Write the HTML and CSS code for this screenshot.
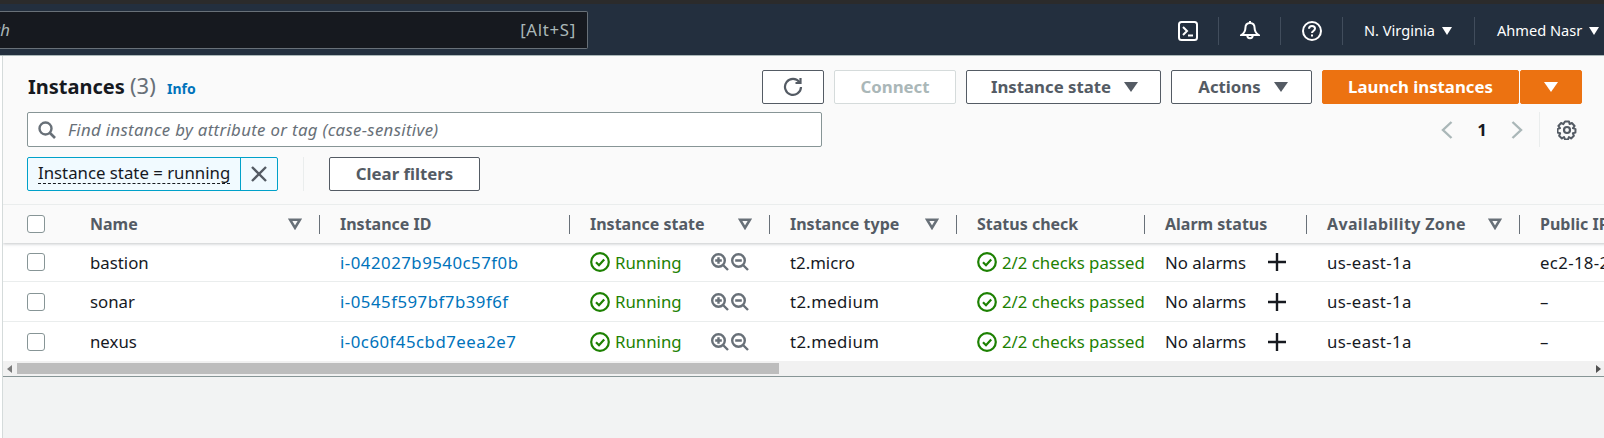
FILE: index.html
```html
<!DOCTYPE html>
<html lang="en">
<head>
    <meta charset="UTF-8">
    <title>Instances</title>
    <link rel="stylesheet" href="styles.css">
</head>
<body>
<svg class="defs" width="0" height="0">
    <symbol id="ok" viewBox="0 0 20 20"><circle cx="10" cy="10" r="8.800" fill="none" stroke="currentColor" stroke-width="2.200"/><path d="M6 10.200l3 3 5.200-5.800" fill="none" stroke="currentColor" stroke-width="2.200"/></symbol>
    <symbol id="zoom-in" viewBox="0 0 18 18"><circle cx="7.500" cy="7.500" r="6.300" fill="none" stroke="currentColor" stroke-width="2.400"/><path d="M12 12l5 5M4.200 7.500h6.600M7.500 4.200v6.600" fill="none" stroke="currentColor" stroke-width="2.400"/></symbol>
    <symbol id="zoom-out" viewBox="0 0 18 18"><circle cx="7.500" cy="7.500" r="6.300" fill="none" stroke="currentColor" stroke-width="2.400"/><path d="M12 12l5 5M4.200 7.500h6.600" fill="none" stroke="currentColor" stroke-width="2.400"/></symbol>
    <symbol id="plus" viewBox="0 0 18 18"><path d="M9 0v18M0 9h18" fill="none" stroke="currentColor" stroke-width="2.400"/></symbol>
    <symbol id="sort" viewBox="0 0 14 12"><path d="M2.200 1.800h9.600L7 9.800z" fill="none" stroke="currentColor" stroke-width="2.600"/></symbol>
</svg>

<header class="nav">
    <div class="nav_search">
        <span class="nav_search_text">Search</span>
        <span class="nav_search_key">[Alt+S]</span>
    </div>
    <div class="nav_items">
        <span class="nav_icon">
            <svg width="20" height="20" viewBox="0 0 20 20"><rect x="1" y="1" width="18" height="18" rx="2.500" fill="none" stroke="#fff" stroke-width="2"/><path d="M5 6l4 4-4 4M10 14.500h5" fill="none" stroke="#fff" stroke-width="2"/></svg>
        </span>
        <span class="nav_icon">
            <svg width="20" height="20" viewBox="0 0 20 20"><path d="M10 2c-3 0-4.600 2.200-4.600 5 0 3.400-1 5-4 7h17.200c-3-2-4-3.600-4-7 0-2.800-1.600-5-4.600-5zM7.300 14.500a2.700 2.700 0 0 0 5.400 0" fill="none" stroke="#fff" stroke-width="2"/><path d="M10 0v2" stroke="#fff" stroke-width="2"/></svg>
        </span>
        <span class="nav_icon">
            <svg width="20" height="20" viewBox="0 0 20 20"><circle cx="10" cy="10" r="9" fill="none" stroke="#fff" stroke-width="2"/><path d="M7 7.800c0-1.800 1.300-2.800 3-2.800s3 1 3 2.600c0 2.400-3 2.400-3 4.400" fill="none" stroke="#fff" stroke-width="2"/><rect x="9" y="13.500" width="2" height="2" fill="#fff"/></svg>
        </span>
        <span class="nav_menu nav_region">N. Virginia<i class="caret caret_white"></i></span>
        <span class="nav_menu nav_user">Ahmed Nasr<i class="caret caret_white"></i></span>
    </div>
</header>

<main class="content">
    <section class="panel">
        <div class="panel_top">
            <h1 class="title">Instances <span class="title_count">(3)</span> <a class="info">Info</a></h1>
            <div class="actions">
                <button class="btn btn_refresh">
                    <svg width="20" height="20" viewBox="0 0 20 20"><path d="M16.500 5.200A8 8 0 1 0 18 10" fill="none" stroke="#545b64" stroke-width="2.200"/><path d="M12.500 6h5V1" fill="none" stroke="#545b64" stroke-width="2.200"/></svg>
                </button>
                <button class="btn btn_connect">Connect</button>
                <button class="btn btn_state">Instance state<i class="caret"></i></button>
                <button class="btn btn_actions">Actions<i class="caret"></i></button>
                <div class="launch">
                    <button class="btn btn_launch">Launch instances</button>
                    <button class="btn btn_launch btn_launch_more"><i class="caret caret_white"></i></button>
                </div>
            </div>
        </div>
        <div class="panel_mid">
            <div class="search">
                <svg width="18" height="18" viewBox="0 0 18 18"><circle cx="7.500" cy="7.500" r="6" fill="none" stroke="#687078" stroke-width="2.400"/><path d="M12 12l5 5" stroke="#687078" stroke-width="2.600"/></svg>
                <span class="search_text">Find instance by attribute or tag (case-sensitive)</span>
            </div>
            <div class="pager">
                <svg width="14" height="20" viewBox="0 0 14 20"><path d="M11.500 2L3 10l8.500 8" fill="none" stroke="#aab7b8" stroke-width="2.400"/></svg>
                <span class="pager_num">1</span>
                <svg width="14" height="20" viewBox="0 0 14 20"><path d="M2.500 2L11 10l-8.500 8" fill="none" stroke="#aab7b8" stroke-width="2.400"/></svg>
                <span class="pager_gear">
                    <svg width="20" height="20" viewBox="0 0 20 20"><circle cx="10" cy="10" r="3" fill="none" stroke="#545b64" stroke-width="2.200"/><path d="M8 1.500h4l.6 2.600 2.300-1.100 2.700 3-1.600 2.100 2.500 1-.1 3.500-2.500.7 1 2.500-2.800 2.600-2.200-1.400-.9 2.400H8l-.9-2.400-2.200 1.400-2.800-2.600 1-2.500-2.500-.7L.5 9.100l2.500-1L1.400 6l2.700-3 2.300 1.100z" fill="none" stroke="#545b64" stroke-width="2" stroke-linejoin="round"/></svg>
                </span>
            </div>
        </div>
        <div class="panel_filters">
            <div class="chip">
                <span class="chip_label"><span class="chip_text">Instance state = running</span></span>
                <span class="chip_close">
                    <svg width="16" height="16" viewBox="0 0 16 16"><path d="M1 1l14 14M15 1L1 15" stroke="#545b64" stroke-width="2.400"/></svg>
                </span>
            </div>
            <span class="filters_sep"></span>
            <button class="btn btn_clear">Clear filters</button>
        </div>
    </section>

    <div class="table">
        <div class="row row_head">
            <div class="th th_check"><span class="box"></span></div>
            <div class="th"><div class="th_in">Name<svg class="sort" width="14" height="12"><use href="#sort"/></svg></div></div>
            <div class="th"><div class="th_in">Instance ID</div></div>
            <div class="th"><div class="th_in">Instance state<svg class="sort" width="14" height="12"><use href="#sort"/></svg></div></div>
            <div class="th"><div class="th_in">Instance type<svg class="sort" width="14" height="12"><use href="#sort"/></svg></div></div>
            <div class="th"><div class="th_in">Status check</div></div>
            <div class="th"><div class="th_in">Alarm status</div></div>
            <div class="th"><div class="th_in th_wide">Availability Zone<svg class="sort" width="14" height="12"><use href="#sort"/></svg></div></div>
            <div class="th"><div class="th_in">Public IPv4 DNS</div></div>
        </div>

        <div class="row row_first">
            <div class="td td_check"><span class="box"></span></div>
            <div class="td">bastion</div>
            <div class="td"><a class="link">i-042027b9540c57f0b</a></div>
            <div class="td td_state">
                <svg class="ok" width="20" height="20"><use href="#ok"/></svg><span class="green">Running</span>
                <span class="zooms"><svg width="18" height="18"><use href="#zoom-in"/></svg><svg width="18" height="18"><use href="#zoom-out"/></svg></span>
            </div>
            <div class="td">t2.micro</div>
            <div class="td td_status"><svg class="ok" width="20" height="20"><use href="#ok"/></svg><span class="green">2/2 checks passed</span></div>
            <div class="td td_alarm">No alarms<svg width="18" height="18"><use href="#plus"/></svg></div>
            <div class="td td_code">us-east-1a</div>
            <div class="td td_code">ec2-18-208-146-23.compute-1.amazonaws.com</div>
        </div>

        <div class="row">
            <div class="td td_check"><span class="box"></span></div>
            <div class="td">sonar</div>
            <div class="td"><a class="link">i-0545f597bf7b39f6f</a></div>
            <div class="td td_state">
                <svg class="ok" width="20" height="20"><use href="#ok"/></svg><span class="green">Running</span>
                <span class="zooms"><svg width="18" height="18"><use href="#zoom-in"/></svg><svg width="18" height="18"><use href="#zoom-out"/></svg></span>
            </div>
            <div class="td td_code">t2.medium</div>
            <div class="td td_status"><svg class="ok" width="20" height="20"><use href="#ok"/></svg><span class="green">2/2 checks passed</span></div>
            <div class="td td_alarm">No alarms<svg width="18" height="18"><use href="#plus"/></svg></div>
            <div class="td td_code">us-east-1a</div>
            <div class="td">–</div>
        </div>

        <div class="row">
            <div class="td td_check"><span class="box"></span></div>
            <div class="td">nexus</div>
            <div class="td"><a class="link">i-0c60f45cbd7eea2e7</a></div>
            <div class="td td_state">
                <svg class="ok" width="20" height="20"><use href="#ok"/></svg><span class="green">Running</span>
                <span class="zooms"><svg width="18" height="18"><use href="#zoom-in"/></svg><svg width="18" height="18"><use href="#zoom-out"/></svg></span>
            </div>
            <div class="td td_code">t2.medium</div>
            <div class="td td_status"><svg class="ok" width="20" height="20"><use href="#ok"/></svg><span class="green">2/2 checks passed</span></div>
            <div class="td td_alarm">No alarms<svg width="18" height="18"><use href="#plus"/></svg></div>
            <div class="td td_code">us-east-1a</div>
            <div class="td">–</div>
        </div>

        <div class="scroll">
            <i class="scroll_left"></i>
            <span class="scroll_thumb"></span>
            <i class="scroll_right"></i>
        </div>
    </div>
</main>
</body>
</html>
```

FILE: styles.css
```css
* {
    margin: 0;
    padding: 0;
    box-sizing: border-box;
}

html, body {
    height: 438px;
    overflow: hidden;
}

body {
    background-color: #fff;
    font-family: "Noto Sans", sans-serif;
    font-size: 16.8px;
    color: #16191f;
}

.defs {
    display: block;
    height: 0;
}

/* nav */
.nav {
    height: 56px;
    display: flex;
    align-items: center;
    padding-top: 4px;
    background-color: #232f3e;
    border-top: 4px solid #2b2b2b;
    border-bottom: 1px solid #aab7b8;
    color: #fff;
}

.nav_search {
    width: 588px;
    height: 38px;
    margin-top: -4px;
    display: flex;
    align-items: center;
    padding-right: 11px;
    background-color: #16191f;
    border: 1px solid #687078;
    border-left: 0;
    border-radius: 0 2px 2px 0;
    color: #aab7b8;
    overflow: hidden;
}

.nav_search_text {
    margin-left: -40px;
    font-style: italic;
}

.nav_search_key {
    margin-left: auto;
    letter-spacing: .7px;
}

.nav_items {
    margin-left: auto;
    margin-top: -2px;
    display: flex;
    align-items: center;
    height: 28px;
}

.nav_icon {
    width: 62px;
    height: 28px;
    display: flex;
    align-items: center;
    justify-content: center;
    border-right: 1px solid #414d5c;
}

.nav_menu {
    display: flex;
    align-items: center;
    padding-bottom: 2px;
    font-size: 14.6px;
}

.nav_region {
    width: 132px;
    height: 28px;
    padding-left: 21px;
    border-right: 1px solid #414d5c;
}

.nav_user {
    width: 129px;
    padding-left: 22px;
}

.caret {
    display: inline-block;
    width: 0;
    height: 0;
    margin-top: 2px;
    margin-left: 13px;
    border-left: 7px solid transparent;
    border-right: 7px solid transparent;
    border-top: 10px solid #545b64;
}

.nav_menu .caret {
    margin-left: 7px;
    border-left-width: 5px;
    border-right-width: 5px;
    border-top-width: 8px;
}

.caret_white {
    border-top-color: #fff;
}

/* page */
.content {
    height: 382px;
    margin-left: 2px;
    background-color: #f2f3f3;
    border-left: 1px solid #d5dbdb;
}

.panel {
    height: 148px;
    padding: 14px 22px 0 24px;
    background-color: #fafafa;
}

.panel_top, .panel_mid {
    display: flex;
    justify-content: space-between;
}

.panel_top {
    height: 34px;
    align-items: center;
}

.title {
    margin: -4px 0 0 1px;
    font-size: 20px;
    font-weight: 700;
}

.title_count {
    font-size: 22px;
    font-weight: 400;
    color: #687078;
}

.info {
    margin-left: 6px;
    font-size: 14px;
    font-weight: 700;
    color: #0073bb;
}

.actions {
    display: flex;
    gap: 10px;
}

.btn {
    height: 34px;
    display: flex;
    align-items: center;
    justify-content: center;
    padding-bottom: 2px;
    background-color: #fff;
    border: 1px solid #545b64;
    border-radius: 2px;
    font-family: inherit;
    font-size: 16.8px;
    font-weight: 700;
    color: #545b64;
}

.btn_refresh {
    width: 62px;
    padding-bottom: 0;
}

.btn_connect {
    width: 122px;
    border-color: #d5dbdb;
    color: #aab7b8;
}

.btn_state {
    width: 195px;
    padding-left: 2px;
}

.btn_actions {
    width: 141px;
    padding-left: 3px;
}

.launch {
    display: flex;
    gap: 1px;
}

.btn_launch {
    width: 197px;
    background-color: #ec7211;
    border-color: #ec7211;
    color: #fff;
}

.btn_launch_more {
    width: 62px;
}

.btn_launch_more .caret {
    margin-left: 0;
}

.panel_mid {
    margin-top: 8px;
    height: 35px;
}

.search {
    width: 795px;
    height: 35px;
    display: flex;
    align-items: center;
    gap: 12px;
    padding-left: 10px;
    background-color: #fff;
    border: 1px solid #879596;
    border-radius: 2px;
}

.search_text {
    font-style: italic;
    letter-spacing: .33px;
    color: #687078;
}

.pager {
    display: flex;
    align-items: center;
    height: 35px;
}

.pager_num {
    width: 56px;
    text-align: center;
    font-weight: 700;
}

.pager_gear {
    width: 43px;
    height: 35px;
    margin-left: 15px;
    display: flex;
    align-items: center;
    justify-content: center;
    padding-left: 12px;
    border-left: 1px solid #eaeded;
}

.panel_filters {
    margin-top: 10px;
    display: flex;
    align-items: center;
}

.chip {
    width: 251px;
    height: 34px;
    display: flex;
    background-color: #f1faff;
    border: 1px solid #00a1c9;
    border-radius: 2px;
}

.chip_label {
    flex: 1;
    display: flex;
    align-items: center;
    padding: 0 0 2px 10px;
}

.chip_text {
    line-height: 21px;
    white-space: nowrap;
    border-bottom: 1px dashed #16191f;
}

.chip_close {
    width: 37px;
    flex: none;
    display: flex;
    align-items: center;
    justify-content: center;
    border-left: 1px solid #00a1c9;
}

.filters_sep {
    width: 1px;
    height: 34px;
    margin: 0 25px;
    background-color: #eaeded;
}

.btn_clear {
    width: 151px;
}

/* table */
.table {
    background-color: #fff;
    overflow: hidden;
}

.row {
    display: grid;
    grid-template-columns: 67px 250px 250px 200px 187px 188px 162px 213px 340px;
    width: 1657px;
    height: 40px;
    border-top: 1px solid #eaeded;
}

.row_head {
    position: relative;
    height: 39px;
    background-color: #fafafa;
    box-shadow: 0 1px 3px rgba(84, 91, 100, 0.35);
}

.row_first {
    height: 38px;
    border-top: 0;
}

.th {
    display: flex;
    align-items: center;
    padding-left: 20px;
    font-size: 16px;
    font-weight: 700;
    color: #545b64;
}

.th_check {
    padding-left: 24px;
}

.th_check::after {
    content: "";
    width: 1px;
    height: 19px;
    margin-left: 25px;
    background-color: #eaeded;
}

.th_in {
    flex: 1;
    height: 19px;
    display: flex;
    align-items: center;
    justify-content: space-between;
    padding-right: 17px;
    border-right: 1px solid #687078;
    white-space: nowrap;
}

.th_wide {
    letter-spacing: .35px;
}

.sort {
    flex: none;
    color: #687078;
}

.td {
    display: flex;
    align-items: center;
    padding: 0 20px;
    white-space: nowrap;
}

.td_code {
    letter-spacing: .35px;
}

.td_check {
    padding-left: 24px;
}

.box {
    width: 18px;
    height: 18px;
    flex: none;
    background-color: #fff;
    border: 1px solid #879596;
    border-radius: 3px;
}

.link {
    letter-spacing: .5px;
    color: #0073bb;
}

.green, .ok {
    color: #1d8102;
}

.ok {
    flex: none;
    margin-right: 5px;
}

.td_status {
    padding-right: 0;
}

.zooms {
    margin-left: auto;
    margin-right: 1px;
    display: flex;
    gap: 2px;
    color: #687078;
}

.td_alarm {
    justify-content: space-between;
    padding-right: 21px;
}

.scroll {
    height: 16px;
    display: flex;
    align-items: center;
    background-color: #f1f1f1;
    border-bottom: 1px solid #879596;
}

.scroll_thumb {
    width: 762px;
    height: 11px;
    margin-left: 5px;
    background-color: #bdbdbd;
}

.scroll_left {
    margin-left: 4px;
    border-right: 5px solid #7a7a7a;
    border-top: 4px solid transparent;
    border-bottom: 4px solid transparent;
}

.scroll_right {
    margin-left: auto;
    margin-right: 3px;
    border-left: 5px solid #505050;
    border-top: 4px solid transparent;
    border-bottom: 4px solid transparent;
}
```
